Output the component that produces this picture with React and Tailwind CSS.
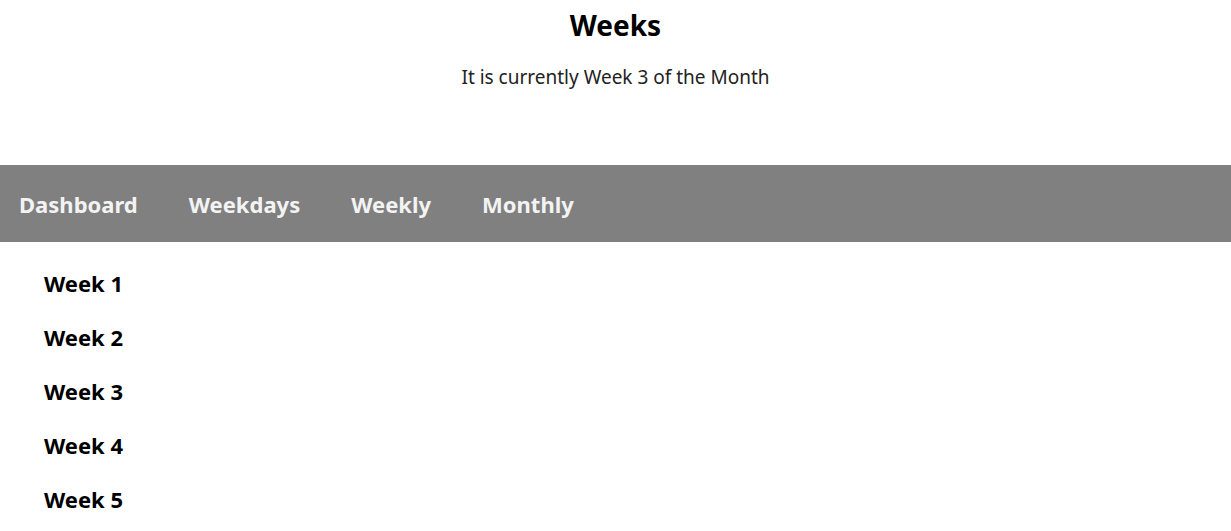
import React from 'react';

const weeks = ['Week 1', 'Week 2', 'Week 3', 'Week 4', 'Week 5'];
const links = ['Dashboard', 'Weekdays', 'Weekly', 'Monthly'];

export default function App() {
  return (
    <div className="min-h-screen bg-white text-black font-['Noto_Sans',sans-serif]">
      <header className="text-center pt-[5px]">
        <h1 className="text-[28px] font-bold leading-[40px]">Weeks</h1>
        <p className="mt-[19px] text-[19px] leading-[26px] text-[#222]">It is currently Week 3 of the Month</p>
      </header>

      <nav className="mt-[75px] h-[77px] bg-[#808080] flex items-center pl-[19px] gap-[51px]">
        {links.map((l) => (
          <a key={l} href="#" className="text-[22px] font-bold text-[#f3f3f3] leading-none">{l}</a>
        ))}
      </nav>

      <ul className="pl-[44px] pt-[27px] flex flex-col gap-[26px]">
        {weeks.map((w) => (
          <li key={w} className="text-[22px] font-bold leading-[28px]">{w}</li>
        ))}
      </ul>
    </div>
  );
}
